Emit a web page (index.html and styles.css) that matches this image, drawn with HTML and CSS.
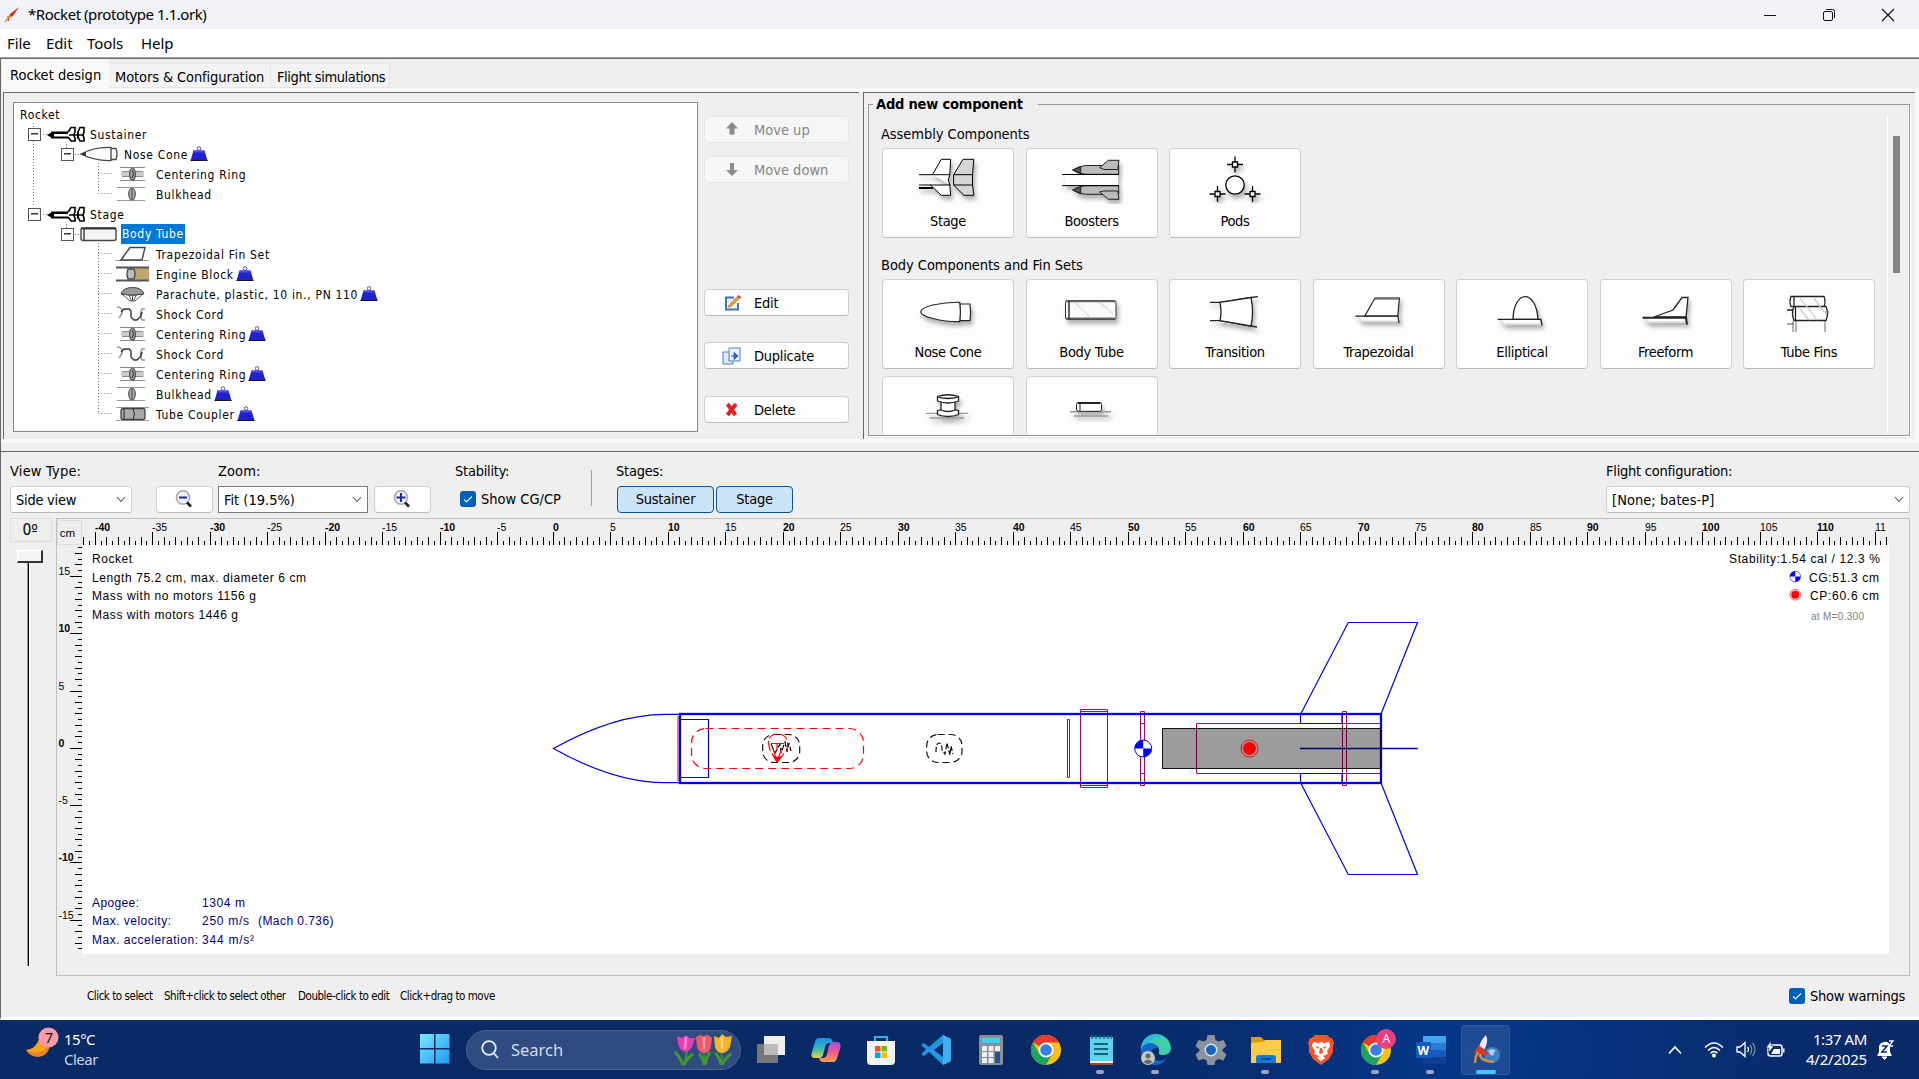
FILE: index.html
```html
<!DOCTYPE html>
<html lang="en">
<head>
<meta charset="utf-8">
<title>*Rocket (prototype 1.1.ork)</title>
<link rel="stylesheet" href="styles.css">
</head>
<body>
<svg class="defs" width="0" height="0">
  <defs>
    <filter id="sh" x="-20%" y="-20%" width="150%" height="160%"><feDropShadow dx="2" dy="4" stdDeviation="2.2" flood-opacity=".3"/></filter>
    <symbol id="weight" viewBox="0 0 18 15"><circle cx="9" cy="2.500" r="1.800" fill="none" stroke="#55a"/><path d="M3.500 4.500h11l3 10H.5z" fill="#2222cc"/><path d="M3.500 4.500h11l.8 2H2.900z" fill="#4b4be8"/><path d="M.5 14.500h17" stroke="#112"/></symbol>
    <symbol id="i-stage" viewBox="0 0 38 16"><path d="M0 9l5-3v6z"/><path d="M4 5.500h19v7H4z"/><path d="M7 8h15v2.500H7z" fill="#fff"/><path d="M21 6l3-4.500h4V6l-1.500 3 1.500 3v3h-4l-3-4M31 6l2-4.500h4V6l-1 3 1 3v3h-4l-2-4z" fill="#fff" stroke="#000" stroke-width="1.600"/><path d="M22 9h15M31 5v8" stroke="#000" stroke-width="1.400"/></symbol>
    <symbol id="i-nose" viewBox="0 0 38 16"><path d="M1 8Q14 1 31 1.500V14.500Q14 15 1 8zM31 2.500h5q2 5.500 0 11h-5" fill="#fff" stroke="#444" stroke-width="1.300"/><path d="M1 8l5-2.200v4.400z" fill="#333"/></symbol>
    <symbol id="i-tube" viewBox="0 0 38 16"><rect x="1" y="2" width="35" height="12.500" rx="2" fill="#f6f6f6" stroke="#444" stroke-width="1.400"/><path d="M1 2.500h35" stroke="#333" stroke-width="2"/><path d="M4 2v12" stroke="#444" stroke-width="1.500"/></symbol>
    <symbol id="i-ring" viewBox="0 0 38 16"><path d="M6 6h23v4H6z" fill="#ccc"/><path d="M5 1.500h25M5 14.500h25M7 5.500h21M7 10.500h21" stroke="#888"/><ellipse cx="17.500" cy="8" rx="2.800" ry="6" fill="#aaa" stroke="#444" stroke-width="1.200"/><path d="M17 4q3 4 0 8" stroke="#222" fill="none"/></symbol>
    <symbol id="i-bulk" viewBox="0 0 38 16"><path d="M2 1.500h28M2 14.500h28" stroke="#999"/><ellipse cx="17" cy="8" rx="3.300" ry="6" fill="#aaa" stroke="#555" stroke-width="1.200"/><path d="M17 2.500v11" stroke="#444"/></symbol>
    <symbol id="i-fin" viewBox="0 0 38 16"><path d="M0 14.500h34" stroke="#999"/><path d="M6 14L15 1.500h15L27 14z" fill="#fff" stroke="#444" stroke-width="1.400"/></symbol>
    <symbol id="i-engine" viewBox="0 0 38 16"><path d="M20 2h14v12H20z" fill="#c4a56c"/><path d="M1 1.500h33M1 14.500h33" stroke="#555" stroke-width="2"/><path d="M13 3h6q2 5 0 10h-6q-2-5 0-10z" fill="#bbb" stroke="#444" stroke-width="1.300"/></symbol>
    <symbol id="i-chute" viewBox="0 0 38 16"><path d="M6 8Q8 1.500 17.500 1.500T29 8L20 9h-5z" fill="#999" stroke="#444"/><path d="M7 8q10 3 21 0l-8 7h-5zM14 9l2.500 6M21 9l-2.500 6M17.500 9v6" fill="none" stroke="#555"/></symbol>
    <symbol id="i-cord" viewBox="0 0 38 16"><path d="M2 1q4 0 5 3t-3 8M30 3h-3q-3 5 0 11h3" stroke="#999" stroke-width="1.600" fill="none"/><path d="M6 6l3-3h5l2 2v6l3 3h3l4-4 1-4" fill="none" stroke="#333" stroke-width="1.400"/></symbol>
    <symbol id="i-coupler" viewBox="0 0 38 16"><path d="M1 1.500h33M1 14.500h33" stroke="#999"/><rect x="6" y="2.500" width="24" height="11" rx="2" fill="#aaa" stroke="#444" stroke-width="1.300"/><path d="M18 2.500q3 5.500 0 11M9 2.500v11" fill="none" stroke="#222"/></symbol>
    <symbol id="chev" viewBox="0 0 10 7"><path d="M1 1l4 4.500L9 1" fill="none" stroke="#555" stroke-width="1.100"/></symbol>
    <symbol id="tick" viewBox="0 0 16 16"><rect width="16" height="16" rx="3" fill="#005fb8"/><path d="M4 8.500l2.500 2.500L12 5.500" fill="none" stroke="#e8f2fb" stroke-width="1.200"/></symbol>
    <symbol id="lens" viewBox="0 0 18 19"><ellipse cx="8" cy="7.500" rx="6.500" ry="6.800" fill="#eef0f8" stroke="#aaa" stroke-width="1.600"/><path d="M12 12.500l4 4" stroke="#222" stroke-width="2.600"/></symbol>
    <symbol id="chrome" viewBox="0 0 32 32"><circle cx="16" cy="16" r="15" fill="#fbc116"/><path d="M16 16L3 8.500A15 15 0 0 1 29 8.500H16z" fill="#e33b2e"/><path d="M3 8.500A15 15 0 0 0 16 31l6.500-11.300L9.500 20z" fill="#1da462"/><circle cx="16" cy="16" r="7.500" fill="#fff"/><circle cx="16" cy="16" r="5.800" fill="#3a7de8"/></symbol>
    <symbol id="cg" viewBox="-10 -10 20 20"><circle r="8.500" fill="#fff" stroke="#00f"/><path d="M0 0V-8.500A8.500 8.500 0 0 0-8.500 0zM0 0V8.500A8.500 8.500 0 0 0 8.500 0z" fill="#00f"/></symbol>
    <symbol id="cp" viewBox="-10 -10 20 20"><circle r="8.500" fill="none" stroke="#f00"/><circle r="6.500" fill="#f00"/></symbol>
  </defs>
</svg>

<header class="titlebar">
  <svg class="app-icon" width="16" height="16" viewBox="0 0 16 16"><path d="M1 15l5-8 9-7-6 9-4 2 0 3-2-1z" fill="#d92a1c"/><path d="M1 15l3-4M3 10l4-1" stroke="#f0a030" stroke-width="1.500"/></svg>
  <span class="title-text">*Rocket (prototype 1.1.ork)</span>
  <div class="win-controls">
    <svg width="14" height="14"><path d="M1 7.500h12" stroke="#111"/></svg>
    <svg width="14" height="14" fill="none" stroke="#111"><rect x="1.500" y="3.500" width="9" height="9" rx="1.500"/><path d="M4 1.500h6.500a2 2 0 0 1 2 2V10"/></svg>
    <svg width="14" height="14"><path d="M1 1l12 12M13 1L1 13" stroke="#111" stroke-width="1.200"/></svg>
  </div>
</header>
<nav class="menubar"><span class="m1">File</span><span class="m2">Edit</span><span class="m3">Tools</span><span class="m4">Help</span></nav>

<main class="app">
  <div class="tabs"><div class="tab active">Rocket design</div><div class="tab t2">Motors &amp; Configuration</div><div class="tab t3">Flight simulations</div></div>
  <section class="upper">
    <div class="pane left-pane">
      <div class="tree">
        <svg class="tree-lines" width="110" height="330" fill="none" stroke="#777" stroke-dasharray="1 2"><path d="M19.500 20v84M52.500 41v4M29 31.500h4M61 51.500h4M84.500 60v30M84.500 70.500H98M84.500 90.500H98M29 111.500h4M52.500 121v4M61 131.500h4M84.500 140v170M84.500 150.500H98M84.500 170.500H98M84.500 190.500H98M84.500 210.500H98M84.500 230.500H98M84.500 250.500H98M84.500 270.500H98M84.500 290.500H98M84.500 310.500H98"/></svg>
        <div class="row root">Rocket</div>
        <div class="row l1"><i class="exp"></i><svg class="ic"><use href="#i-stage"/></svg><span>Sustainer</span></div>
        <div class="row l2"><i class="exp"></i><svg class="ic"><use href="#i-nose"/></svg><span>Nose Cone</span><svg class="wt"><use href="#weight"/></svg></div>
        <div class="row l3"><svg class="ic"><use href="#i-ring"/></svg><span>Centering Ring</span></div>
        <div class="row l3"><svg class="ic"><use href="#i-bulk"/></svg><span>Bulkhead</span></div>
        <div class="row l1"><i class="exp"></i><svg class="ic"><use href="#i-stage"/></svg><span>Stage</span></div>
        <div class="row l2"><i class="exp"></i><svg class="ic"><use href="#i-tube"/></svg><span class="sel">Body Tube</span></div>
        <div class="row l3"><svg class="ic"><use href="#i-fin"/></svg><span>Trapezoidal Fin Set</span></div>
        <div class="row l3"><svg class="ic"><use href="#i-engine"/></svg><span>Engine Block</span><svg class="wt"><use href="#weight"/></svg></div>
        <div class="row l3"><svg class="ic"><use href="#i-chute"/></svg><span>Parachute, plastic, 10 in., PN 110</span><svg class="wt"><use href="#weight"/></svg></div>
        <div class="row l3"><svg class="ic"><use href="#i-cord"/></svg><span>Shock Cord</span></div>
        <div class="row l3"><svg class="ic"><use href="#i-ring"/></svg><span>Centering Ring</span><svg class="wt"><use href="#weight"/></svg></div>
        <div class="row l3"><svg class="ic"><use href="#i-cord"/></svg><span>Shock Cord</span></div>
        <div class="row l3"><svg class="ic"><use href="#i-ring"/></svg><span>Centering Ring</span><svg class="wt"><use href="#weight"/></svg></div>
        <div class="row l3"><svg class="ic"><use href="#i-bulk"/></svg><span>Bulkhead</span><svg class="wt"><use href="#weight"/></svg></div>
        <div class="row l3"><svg class="ic"><use href="#i-coupler"/></svg><span>Tube Coupler</span><svg class="wt"><use href="#weight"/></svg></div>
      </div>
      <div class="actions">
        <div class="btn disabled"><svg width="20" height="18" viewBox="0 0 20 18"><path d="M10 1l6 6.500h-3.500v6h-5v-6H4z" fill="#8c8c8c"/></svg>Move up</div>
        <div class="btn disabled b2"><svg width="20" height="18" viewBox="0 0 20 18"><path d="M10 15l6-6h-4V2H8v7H4z" fill="#8c8c8c"/></svg>Move down</div>
        <div class="btn b3"><svg width="20" height="18" viewBox="0 0 20 18"><path d="M12 3.500H4v12h12V9" fill="#eaf3fd" stroke="#3f76b5" stroke-width="2"/><path d="M7 11l9-9 2 2-9 8.500-3 .5z" fill="#e8a33a" stroke="#a56a1a" stroke-width=".6"/><path d="M16 1.500L18.500 4" stroke="#d44" stroke-width="2"/></svg>Edit</div>
        <div class="btn b4"><svg width="20" height="18" viewBox="0 0 20 18"><path d="M1 5h10v12H1z" fill="#dfeaf7" stroke="#4f80bd"/><path d="M7 1h11v13H7z" fill="#eaf2fb" stroke="#4f80bd"/><path d="M9 9h6M12 5.500L16 9l-4 3.500z" stroke="#2a62d8" fill="#2a62d8"/></svg>Duplicate</div>
        <div class="btn b5"><svg width="20" height="18" viewBox="0 0 20 18"><path d="M5.500 3l8 11M14 3L5.500 14" stroke="#e02424" stroke-width="4"/></svg>Delete</div>
      </div>
    </div>
    <div class="pane right-pane">
      <fieldset class="group">
        <legend>Add new component</legend>
        <div class="lib">
          <h4>Assembly Components</h4>
          <div class="cards">
            <div class="card"><svg class="ci" viewBox="0 0 64 50"><g filter="url(#sh)" stroke="#000" fill="#fff"><path d="M3 20.700h13M3 31h12" /><path d="M3 34h14" stroke-width="2"/><path d="M16.500 20.700L25.300 5.300h9.300l-.8 15.400q-3 5 0 10.300l.8 10.300h-9.300L14.400 31h20M16.500 20.700h17.300"/><path fill="#d6d6d6" d="M37.700 20.700L47 5.300h10.800l-1.300 15.400V31l1.300 10.300H48L37.500 31zM37.700 20.700h19M37.500 31h19"/></g></svg>Stage</div>
            <div class="card"><svg class="ci" viewBox="0 0 64 50"><g filter="url(#sh)" stroke="#222" fill="#bbb"><path d="M5 20.500h53v11H5z" fill="#fff" stroke="none"/><path d="M12.700 16q6-4 13-4.500h33v8.800h-33q-7 0-13-4.300z"/><path d="M12.700 36q6-4 13-4.300h33v8.600h-33q-7 0-13-4.300z"/><path d="M39.600 13.500l8.800-7.200H59l-1.300 9.200h-14zM39.600 38l8.800 7.300H59L57.700 37h-14z"/><path d="M2 20.500h57M2 31.600h57" stroke="#000"/><path d="M12.700 16l8-3v6zM12.700 36l8-3v6z" fill="#555"/></g></svg>Boosters</div>
            <div class="card"><svg class="ci" viewBox="0 0 64 50"><g filter="url(#sh)" stroke="#000" stroke-width="1.300" fill="#fff"><circle cx="32" cy="31" r="9.200"/><path d="M32 2.500v16M24 10.500h16M14.500 32v16M6.500 40h16M49.500 32v16M41.500 40h16"/><path d="M29.500 8h5v5h-5zM12 37.500h5v5h-5zM47 37.500h5v5h-5z"/></g></svg>Pods</div>
          </div>
          <h4 class="h2">Body Components and Fin Sets</h4>
          <div class="cards">
            <div class="card"><svg class="ci" viewBox="0 0 64 50"><g filter="url(#sh)" stroke="#222" fill="#fff" stroke-width="1.200"><path d="M43.900 19h10q1.500 8 0 16.700h-10z"/><path d="M4.700 27q0-4 12-7 14-3 27-2.700 1.500 9.500 0 19.400Q31 37 17 33.500 5 30.500 4.700 27z"/></g></svg>Nose Cone</div>
            <div class="card"><svg class="ci" viewBox="0 0 64 50"><g filter="url(#sh)" stroke="#333" fill="#fafafa"><rect x="5.500" y="15.500" width="50.500" height="19" rx="2"/><path d="M6 16.200h49M6 33.500h49" stroke="#666" stroke-width="2"/><path d="M9 16v18" stroke-width="1.500"/><path d="M14 17q8 7 17 16M38 17q8 4 15 12" stroke="#ccc" fill="none"/></g></svg>Body Tube</div>
            <div class="card"><svg class="ci" viewBox="0 0 64 50"><g filter="url(#sh)" stroke="#222" fill="#fff" stroke-width="1.300"><path d="M7 17.300h10L48 12.500l7-.8M7 35.700h10L48 41l6 1" /><path d="M17 17.300L48 12.500q3 14 0 28.500L17 35.700q2-9 0-18.400z"/></g></svg>Transition</div>
            <div class="card"><svg class="ci" viewBox="0 0 64 50"><g filter="url(#sh)" stroke="#222" fill="#fff" stroke-width="1.200"><path d="M10 31l5 5h37v-5" stroke="#ddd"/><path d="M17.800 31L28 13h24.400L50.800 31z"/><path d="M28 13.500h24" stroke="#777" stroke-width="2.500"/><path d="M8.400 31.200H51l1 7" fill="none"/></g></svg>Trapezoidal</div>
            <div class="card"><svg class="ci" viewBox="0 0 64 50"><g filter="url(#sh)" stroke="#222" fill="#fff" stroke-width="1.300"><path d="M10 35l5 4h35v-4" stroke="#ddd"/><path d="M23 34.300C24 4 46 4 48 34.300z"/><path d="M7.600 34.300H51l1 6" fill="none"/></g></svg>Elliptical</div>
            <div class="card"><svg class="ci" viewBox="0 0 64 50"><g filter="url(#sh)" stroke="#222" fill="#fff" stroke-width="1.300"><path d="M10 33l5 4h36v-4" stroke="#ddd"/><path d="M20 32l19-7 9-12.500h6L52 32z"/><path d="M8.500 32.700H52l1 7" stroke-width="2" fill="none"/></g></svg>Freeform</div>
            <div class="card"><svg class="ci" viewBox="0 0 64 50"><g stroke="#222" fill="#fff" stroke-width="1.300"><path d="M14 11.500h33q2 5 0 10H14q-2-5 0-10zM17 21.500h32q3 7 0 14H17q-3-7 0-14z"/><path d="M17 12v10M18.500 22v14M10 25h6"/><path d="M16 36v11M19 36v11M48 36v11M10 39h7M48 27h4" stroke="#888"/><path d="M22 12q4 6 10 12 3 5 8 11M37 13l10 14M22 23l10 12" stroke="#ccc" fill="none"/></g></svg>Tube Fins</div>
            <div class="card"><svg class="ci" viewBox="0 0 64 50"><g filter="url(#sh)" stroke="#222" fill="#fff" stroke-width="1.300"><path d="M10 31.300h42M14 36h34" stroke="#999"/><path d="M21.500 28.500q10.500-3 21 0v4q-10.500 4-21 0z"/><path d="M25 19v9q7 3 14 0v-9z"/><path d="M21.500 14.500q10.500-3.500 21 0v4.500q-10.500 4-21 0zM21.500 15q10.500 3 21 0"/></g></svg></div>
            <div class="card"><svg class="ci" viewBox="0 0 64 50"><g filter="url(#sh)" stroke="#222" fill="#fff"><path d="M10 29.700h41M14 34h34" stroke="#999" stroke-width="1.500"/><rect x="16.500" y="20.500" width="25" height="8.800" rx="2"/><path d="M18 21h22" stroke-width="2"/><path d="M20 21v8"/></g></svg></div>
          </div>
        </div>
        <div class="scroll"><div class="thumb"></div></div>
      </fieldset>
    </div>
  </section>

  <section class="lower">
    <div class="toolbar">
      <div class="fld f-view"><label>View Type:</label><div class="combo">Side view<svg class="cv"><use href="#chev"/></svg></div></div>
      <div class="zbtn z1"><svg width="18" height="19"><use href="#lens"/><path d="M4 7.500h8" stroke="#1a2ea0" stroke-width="2"/></svg></div>
      <div class="fld f-zoom"><label>Zoom:</label><div class="combo dark">Fit (19.5%)<svg class="cv"><use href="#chev"/></svg></div></div>
      <div class="zbtn z2"><svg width="18" height="19"><use href="#lens"/><path d="M3.500 7.500h9M8 3v9" stroke="#1a2ea0" stroke-width="2"/></svg></div>
      <div class="fld f-stab"><label>Stability:</label><div class="check"><svg width="16" height="16"><use href="#tick"/></svg>Show CG/CP</div></div>
      <div class="vsep"></div>
      <div class="fld f-stages"><label>Stages:</label><div class="toggles"><span class="tg a">Sustainer</span><span class="tg b">Stage</span></div></div>
      <div class="fld f-cfg"><label>Flight configuration:</label><div class="combo">[None; bates-P]<svg class="cv"><use href="#chev"/></svg></div></div>
    </div>
    <div class="stagearea">
      <div class="rot">
        <div class="deg">0º</div>
        <div class="knob"></div><div class="track"></div>
      </div>
      <div class="frame">
        <div class="unit">cm</div>
        <svg id="hruler" width="1807" height="25" viewBox="82 520 1807 25"></svg>
        <svg id="vruler" width="25" height="409" viewBox="57 545 25 409"></svg>
        <svg class="canvas" width="1807" height="409" viewBox="82 545 1807 409">
          <g fill="none" stroke="#b00060">
            <path d="M1067.500 719.500h2v58h-2zM1080.500 709.500h27v78h-27zM1080.500 711.500h27M1080.500 785.500h27M1140.500 711.500h4v74h-4zM1140.500 723.500h4M1140.500 773.500h4M1342.500 711.500h4v74h-4zM1381 723.500h-184.500v50H1381M678 716v65"/>
          </g>
          <g fill="none" stroke="#0000e6">
            <path d="M680 714.300H665C630 714.300 590 728 553.400 748.500 590 769 630 782.700 665 782.700h15M680 719.500h28.500v58H680" stroke-width="1.200"/>
            <path d="M1300.700 714L1348.300 622.500h69.200L1381 714M1300.700 783l47.600 91.500h69.200L1381 783M1300.500 714v9.500h41.500V714M1300.500 783v-9.500h41.500v9.500" stroke-width="1.200"/>
            <rect x="680" y="714" width="701" height="69" stroke-width="2.300"/>
            <path d="M1300 748.500h117.700" stroke="#0000b4" stroke-width="1.400"/>
          </g>
          <rect x="1162.500" y="728.500" width="218.500" height="40" fill="#000" fill-opacity=".39" stroke="#111"/>
          <g fill="none" stroke="#111" stroke-width="1.200">
            <rect x="762.700" y="734.500" width="37" height="28" rx="11" stroke-dasharray="7 4"/>
            <rect x="926.700" y="734.500" width="35.300" height="28" rx="11" stroke-dasharray="7 4"/>
            <path d="M771 744l4 9 5-9 1 9 4-11 2 10 2-9 2 8" stroke-dasharray="6 2"/>
            <path d="M936 752q0-9 3-9t3 7l3 4 2-11 3 12 1-9 2 8" stroke-dasharray="5 2"/>
          </g>
          <g fill="none" stroke="#f00" stroke-width="1.200">
            <rect x="691.500" y="728.500" width="172" height="40" rx="14" stroke-dasharray="8 5"/>
            <path d="M770 750q-5-15 7-16 13 0 10 16l-10 12z" stroke-dasharray="9 3"/>
            <path d="M771 743.500h13M777 743v7M777 762l-4-14M777 762l5-14"/>
            <path d="M774 757h7l-3.500 5z" fill="#f00"/>
          </g>
          <use href="#cg" x="1133.200" y="738.500" width="20" height="20"/>
          <use href="#cp" x="1239.500" y="738.500" width="20" height="20"/>
          <g class="ct">
            <text x="92" y="563" textLength="40">Rocket</text>
            <text x="92" y="582" textLength="214">Length 75.2 cm, max. diameter 6 cm</text>
            <text x="92" y="600" textLength="164">Mass with no motors 1156 g</text>
            <text x="92" y="619" textLength="146">Mass with motors 1446 g</text>
            <text x="1729" y="563" textLength="151">Stability:1.54 cal / 12.3 %</text>
            <text x="1809" y="582" textLength="70">CG:51.3 cm</text>
            <text x="1810" y="600" textLength="69">CP:60.6 cm</text>
            <text x="1811" y="619.500" textLength="53" class="mach">at M=0.300</text>
          </g>
          <use href="#cg" x="1789" y="570.300" width="12.500" height="12.500"/>
          <use href="#cp" x="1789" y="588.500" width="12.500" height="12.500"/>
          <g class="ct navy">
            <text x="92" y="907" textLength="47">Apogee:</text><text x="202" y="907" textLength="43">1304 m</text>
            <text x="92" y="925" textLength="79">Max. velocity:</text><text x="202" y="925" textLength="47">250 m/s</text><text x="258" y="925" textLength="75.500">(Mach 0.736)</text>
            <text x="92" y="944" textLength="106">Max. acceleration:</text><text x="202" y="944" textLength="52">344 m/s²</text>
          </g>
        </svg>
      </div>
    </div>
    <div class="hints"><span class="h-a">Click to select</span><span class="h-b">Shift+click to select other</span><span class="h-c">Double-click to edit</span><span class="h-d">Click+drag to move</span>
      <div class="check warn"><svg width="16" height="16"><use href="#tick"/></svg>Show warnings</div></div>
  </section>
</main>

<footer class="taskbar">
  <div class="weather">
    <svg width="36" height="34" viewBox="0 0 36 34"><path d="M26 12a15 15 0 0 1-25 11q10-1 13-11l12-2z" fill="#f5a21d"/><path d="M1 23q14 8 24-6-1 12-12 13-8 0-12-7z" fill="#ee7f22"/><circle cx="23.500" cy="10.500" r="10" fill="#ff99a4"/><text x="20" y="15.500" class="badge">7</text></svg>
    <div class="wtxt"><span>15°C</span><span class="dim">Clear</span></div>
  </div>
  <div class="tb-main">
    <svg class="start" width="30" height="30"><defs><linearGradient id="gWin" x1="0" y1="0" x2="1" y2="1"><stop offset="0" stop-color="#7be8fb"/><stop offset="1" stop-color="#1a9cf5"/></linearGradient></defs><path d="M0 0h14v14H0zM15.500 0h14v14h-14zM0 15.500h14v14H0zM15.500 15.500h14v14h-14z" fill="url(#gWin)"/></svg>
    <div class="search"><svg width="20" height="20" fill="none" stroke="#e8ecf5" stroke-width="1.800"><circle cx="9" cy="8" r="6.800"/><path d="M13.500 13l4.500 5"/></svg><span>Search</span>
      <svg class="tulips" width="60" height="32" viewBox="0 0 60 32"><g stroke="#3f9a2a" stroke-width="1.800" fill="none"><path d="M14 17q-1 7-3 14M31 16v15M49 16l-1 15"/><path d="M2 18q5 5 8 13M20 20q-6 4-9 11M26 20q4 4 5 11M37 18q-4 6-5 13M42 19q5 5 6 12M58 20q-6 4-9 11" stroke-width="3"/></g><path d="M4 2l5 2 4-3 3 3 6 0-3 9q-4 6-9 4-4-2-5-8z" fill="#e83fb4"/><path d="M23 3l4-2 4 1 4-1 4 3-1 9q-2 6-7 6t-7-6z" fill="#f0596c"/><path d="M41 2l5 2 3-4 4 3 6-1-2 11q-3 6-8 6t-7-6z" fill="#f5b428"/><path d="M13 3l-1 12M31 3v12M49 3v12" stroke="#fff" stroke-opacity=".4" stroke-width="2.500"/></svg></div>
    <div class="apps">
      <div class="app-i"><svg viewBox="0 0 32 32"><path d="M2 10h21v19H2z" fill="#777"/><path d="M9 2h21v19H9z" fill="#eee"/><path d="M9 10h14v11H9z" fill="#bbb"/></svg></div>
      <div class="app-i"><svg viewBox="0 0 32 32"><defs><linearGradient id="c1" x1="0" y1="0" x2="0" y2="1"><stop offset="0" stop-color="#1a8bf0"/><stop offset=".6" stop-color="#41c3a8"/><stop offset="1" stop-color="#f2d23c"/></linearGradient><linearGradient id="c2" x1="0" y1="0" x2="0" y2="1"><stop offset="0" stop-color="#a052e8"/><stop offset=".5" stop-color="#f0568c"/><stop offset="1" stop-color="#ffa04a"/></linearGradient></defs><path d="M9 4h10q3 0 4 5h-4q-3 0-4 4l-2 8q-1 3-4 3H5q-5 0-3-6L5 8q1-4 4-4z" fill="url(#c1)"/><path d="M23 28H13q-3 0-4-4h4q3 0 4-4l2-8q1-4 4-4h4q5 0 3 7l-3 9q-1 4-4 4z" fill="url(#c2)"/></svg></div>
      <div class="app-i"><svg viewBox="0 0 32 32"><path d="M10 9V3h12v6" fill="none" stroke="#35b0f0" stroke-width="2"/><path d="M2 7h28v20q0 4-4 4H6q-4 0-4-4z" fill="#f3f3f3"/><path d="M10 12h5.500v5.500H10z" fill="#f25022"/><path d="M16.500 12H22v5.500h-5.500z" fill="#7fba00"/><path d="M10 18.500h5.500V24H10z" fill="#00a4ef"/><path d="M16.500 18.500H22V24h-5.500z" fill="#ffb900"/></svg></div>
      <div class="app-i"><svg viewBox="0 0 32 32"><path d="M23 1l8 4v22l-8 4L9 18 4 22l-3-2 5-4.500L1 11l3-2 5 4z" fill="#2196e3"/><path d="M23 9v14l-9-7z" fill="#0a2c6b"/><path d="M23 1l8 4v22l-8 4z" fill="#3db0f5"/></svg></div>
      <div class="app-i"><svg viewBox="0 0 32 32"><rect x="4" y="1" width="24" height="30" rx="2" fill="#8a8f96"/><path d="M7 4h18v5H7z" fill="#3fd0f5"/><path d="M7 12h5v5H7zM13.500 12h5v5h-5zM20 12h5v5h-5zM7 18h5v5H7zM13.500 18h5v5h-5zM7 24h5v5H7zM13.500 24h5v5h-5z" fill="#eee"/><path d="M20 18h5v11h-5z" fill="#1d5591"/></svg></div>
      <div class="app-i"><svg viewBox="0 0 32 32"><use href="#chrome"/></svg></div>
      <div class="app-i run"><svg viewBox="0 0 32 32"><path d="M5 3h23v26H5z" fill="#5fd4e8"/><path d="M5 28h23v3H5z" fill="#a04c20"/><path d="M5 27h23v2H5z" fill="#eee"/><path d="M7 1v4M11 1v4M15 1v4M19 1v4M23 1v4M26 1v4" stroke="#186a86" stroke-width="1.500"/><path d="M9 10h14M9 15h14M9 20h14" stroke="#136080" stroke-width="2"/></svg></div>
      <div class="app-i run"><svg viewBox="0 0 32 32"><path d="M1 16A15 15 0 0 1 31 14q0 7-8 7-5 0-4-3 1-7-6-7-9 0-9 9z" fill="#3ccfa8"/><path d="M1 16A15 15 0 0 1 16 1q6 0 9 3-13-3-17 7z" fill="#2bb6e8"/><path d="M1 16q2-7 10-7 5 0 7 5-7-1-7 6 1 6 8 7 4 0 7-2-4 6-11 6Q1 30 1 16z" fill="#1268c8"/><circle cx="8" cy="24" r="7" fill="#c9c5c2"/><circle cx="8" cy="22" r="2.500" fill="#666"/><path d="M3.500 28q4.500-5 9 0-4 4-9 0z" fill="#666"/></svg></div>
      <div class="app-i"><svg viewBox="0 0 32 32"><path d="M12.500 1h7l1 5 3 1.500 5-1.500 3 6-4 3.500v1.500l4 3.500-3 6-5-1.500-3 1.500-1 4.500h-7l-1-4.500-3-1.500-5 1.500-3-6L4.500 17v-1.500L.5 12l3-6 5 1.500 3-1.500z" fill="#8b929b"/><circle cx="16" cy="16" r="6.500" fill="#cfe6fa"/><circle cx="16" cy="16" r="5" fill="#1864b8"/></svg></div>
      <div class="app-i run"><svg viewBox="0 0 32 32"><path d="M1 3h10l4 4h8v5H1z" fill="#dc9a0c"/><path d="M1 9l12-1 2-2h16v23H1z" fill="#ffcc4a"/><path d="M6 29v-5q0-3 3-3h14q3 0 3 3v5z" fill="#157ad6"/><path d="M11 25h10" stroke="#0d4d96" stroke-width="2"/></svg></div>
      <div class="app-i"><svg viewBox="0 0 32 32"><path d="M10 1h12l3 3 2 0 2 5-1 3 0 6-4 7-8 6-8-6-4-7V12L3 9l2-5h2z" fill="#fb542b"/><path d="M8 8l5 1 3-1 3 1 5-1 1 4-3 5 1 3-5 2 2 2-4 3-4-3 2-2-5-2 1-3-3-5z" fill="#fff"/><path d="M10 12l4 1-1 2zM22 12l-4 1 1 2zM15 14h2l1 5-2 1-2-1z" fill="#fb542b"/></svg></div>
      <div class="app-i run"><svg viewBox="0 0 32 32"><use href="#chrome"/></svg><span class="prof">A</span></div>
      <div class="app-i run"><svg viewBox="0 0 32 32"><path d="M8 2h23v8H8z" fill="#41a5ee"/><path d="M8 9h23v8H8z" fill="#2b7cd3"/><path d="M8 16h23v7H8z" fill="#185abd"/><path d="M8 23h23v7H8z" fill="#103f91"/><rect x="1" y="8" width="15" height="16" rx="1" fill="#185abd"/><text x="2.500" y="20.500" class="w">W</text></svg></div>
      <div class="app-i cur"><svg viewBox="0 0 32 32"><circle cx="22" cy="21" r="8" fill="#3f7fc4"/><path d="M18 17q4-4 8 0-3 1-2 4-3 2-6-4z" fill="#a8cdf0"/><path d="M16 1q3 7-2 15l-5-2Q10 7 16 1z" fill="#f3ecec"/><path d="M8 11l6 4 5 5-4 2-5-2-7-1 4-4z" fill="#d63a2c"/><path d="M8 18q-3 5-3 11M10 20q0 7 14 8" stroke="#d98c3a" stroke-width="2.500" fill="none"/></svg></div>
    </div>
  </div>
  <div class="tray">
    <svg class="t-a" width="14" height="10"><path d="M1 8.500L7 2l6 6.500" fill="none" stroke="#fff" stroke-width="1.600"/></svg>
    <svg class="t-b" width="20" height="17" viewBox="0 0 20 17" fill="none" stroke="#fff" stroke-width="1.500"><path d="M1 6.500q9-9 18 0M4 9.500q6-6 12 0M6.500 12.300q3.500-3.500 7 0"/><circle cx="10" cy="14.500" r="1.200" fill="#fff"/></svg>
    <svg class="t-c" width="20" height="17" viewBox="0 0 20 17" fill="none" stroke="#fff" stroke-width="1.300"><path d="M1 6h3l5-4.500v14L4 11H1z"/><path d="M11.500 6q2 2.500 0 5"/><path d="M14 4q3.500 4.500 0 9M16.500 2q5 6.500 0 13" stroke-opacity=".45"/></svg>
    <svg class="t-d" width="21" height="17" viewBox="0 0 21 17"><rect x="3" y="4" width="14" height="11" rx="2.500" fill="none" stroke="#fff" stroke-width="1.500"/><path d="M18 7.500h1.500v4H18zM9 8h6v5H6z" fill="#fff"/><path d="M6 0L1 7h3l-1 5 6-7H6z" fill="#fff" stroke="#0b2a66" stroke-width=".6"/></svg>
    <div class="clock"><span>1:37 AM</span><span>4/2/2025</span></div>
    <svg class="t-e" width="20" height="20" viewBox="0 0 20 20"><path d="M8 2q5-1 6 4v6l2 4H1l2-4V7q0-4 5-5z" fill="#fff"/><path d="M6 17h5l-2.500 2.500z" fill="#fff" stroke="#fff"/><path d="M6 6h5l-5 6h5" stroke="#0b2a66" fill="none" stroke-width="1.500"/><path d="M13 1h4l-4 5h4" stroke="#fff" fill="none" stroke-width="1.300"/></svg>
  </div>
</footer>
<script src="script.js"></script>
</body>
</html>
```
FILE: styles.css
```css
* { box-sizing: border-box; }
body { margin: 0; width: 1919px; height: 1079px; overflow: hidden; background: #efefef; color: #000; display: flex; flex-direction: column; font: 14.5px/18px "DejaVu Sans Condensed", "DejaVu Sans", sans-serif; letter-spacing: -0.25px; white-space: nowrap; }
svg { display: block; flex: none; }
.defs { height: 0; }
.titlebar { flex: none; height: 29px; background: #f1f3f9; display: flex; align-items: center; padding-left: 4px; font: 15px/20px "Noto Sans", sans-serif; letter-spacing: -0.45px; }
.title-text { margin: -2px 0 0 8px; }
.win-controls { margin-left: auto; display: flex; gap: 45px; padding-right: 24px; }
.menubar { flex: none; height: 29px; background: #fff; border-bottom: 1px solid #a9a9a9; display: flex; align-items: center; padding: 0 0 0 7px; font: 15px/20px "Noto Sans", sans-serif; letter-spacing: -0.1px; }
.menubar span { width: 39px; }
.menubar .m2 { width: 41px; }
.menubar .m3 { width: 54px; }
.app { flex: none; height: 962px; border-left: 1px solid #696969; border-bottom: 3px solid #fff; display: flex; flex-direction: column; }
.tabs { flex: none; height: 34px; border-top: 1px solid #696969; border-bottom: 4px solid #f9f9f9; display: flex; align-items: flex-end; padding-left: 1px; }
.tab { height: 25px; padding-top: 4px; background: #f3f3f3; border: 1px solid #e5e5e5; border-width: 1px 1px 1px 0; }
.tab.active { width: 107px; height: 29px; padding: 7px 0 0 8px; background: #f9f9f9; border: 0; letter-spacing: 0; }
.t2 { width: 162px; padding-left: 6px; letter-spacing: -0.1px; }
.t3 { width: 119px; padding-left: 6px; letter-spacing: -0.4px; }
.upper { flex: none; height: 351px; padding-left: 2px; display: flex; gap: 4px; border-bottom: 4px solid #f9f9f9; border-right: 4px solid #f9f9f9; }
.pane { border: 1px solid #696969; border-width: 1px 0 0 1px; display: flex; }
.left-pane { width: 856px; padding: 9px 0 0 9px; }
.right-pane { flex: 1; padding: 0 5px 0 4px; }
.tree { position: relative; width: 685px; height: 330px; background: #fff; border: 1px solid #828790; padding: 1px 0 0 6px; font-size: 12px; letter-spacing: 0.68px; }
.tree-lines { position: absolute; left: 0; top: 0; }
.row { height: 20px; display: flex; align-items: center; position: relative; }
.row span, .root { padding-top: 1px; }
.ic { width: 38px; height: 16px; }
.wt { width: 18px; height: 15px; margin: -2px 0 0 2px; }
.exp { width: 13px; height: 13px; border: 1px solid #555; background: linear-gradient(#333, #333) center/7px 1.5px no-repeat #fff; }
.l1 { padding-left: 8px; }
.l1 .ic { margin: 0 5px 0 6px; }
.l2 { padding-left: 41px; }
.l2 .ic { margin: 0 6px 0 6px; }
.l3 { padding-left: 95px; }
.l3 .ic { margin-right: 3px; }
.row .sel { background: #0078d7; color: #fff; height: 20px; line-height: 20px; padding: 0 1px; margin-left: -3px; }
.actions { padding: 14px 0 0 6px; }
.btn { width: 145px; height: 27px; margin-bottom: 13px; background: #fdfdfd; border: 1px solid #d0d0d0; border-bottom-color: #b8b8b8; border-radius: 4px; display: flex; align-items: center; padding-left: 17px; gap: 12px; }
.btn.disabled { background: #f6f6f6; border-color: #e6e6e6; color: #858585; letter-spacing: 0; }
.b2 { margin-bottom: 106px; }
.b3 { margin-bottom: 26px; }
.b4 { margin-bottom: 27px; }
.group { flex: 1; margin: 0; min-width: 0; height: 343px; border: 1px solid #999; box-shadow: 1px 1px 0 #fff; padding: 0 8px 0 12px; display: flex; justify-content: space-between; }
.group legend { font-weight: bold; padding: 0 15px 0 3px; margin-left: -8px; height: 23px; line-height: 22px; letter-spacing: -0.2px; }
.lib { width: 1005px; height: 318px; overflow: hidden; }
.lib h4 { margin: 0; font-weight: normal; height: 32px; padding-top: 9px; letter-spacing: -0.05px; }
.lib h4.h2 { height: 41px; padding-top: 18px; }
.lib .cards { display: grid; grid-template-columns: repeat(7, 132px); gap: 7px 11.500px; margin-left: 1px; letter-spacing: -0.35px; }
.lib .cards:not(:last-child) { height: 90px; }
.card { height: 90px; background: #fdfdfd; border: 1px solid #d0d0d0; border-bottom-color: #b8b8b8; border-radius: 4px; display: flex; flex-direction: column; align-items: center; padding-top: 5px; }
.ci { width: 64px; height: 50px; margin-bottom: 8px; }
.scroll { width: 14px; height: 318px; border-left: 1px solid #fff; padding: 20px 0 0 5px; }
.thumb { width: 7px; height: 137px; background: #858585; }
.lower { flex: 1; margin-top: 8px; margin-left: -1px; border-top: 1px solid #696969; border-left: 1px solid #696969; display: flex; flex-direction: column; }
.toolbar { flex: none; height: 66px; display: flex; padding: 10px 9px 0 9px; }
.fld label { display: block; height: 24px; line-height: 18px; }
.f-view label { letter-spacing: 0.2px; }
.f-zoom label { letter-spacing: 0.1px; }
.combo { height: 27px; background: #fdfdfd; border: 1px solid #d0d0d0; border-bottom-color: #b8b8b8; border-radius: 3px; display: flex; align-items: center; justify-content: space-between; padding: 0 5px; }
.combo.dark { border: 1px solid #7a7a7a; border-radius: 0; letter-spacing: 0; }
.f-cfg .combo { letter-spacing: 0.05px; }
.cv { width: 10px; height: 7px; }
.f-view { width: 122px; }
.zbtn { width: 57px; height: 27px; margin-top: 24px; background: #fdfdfd; border: 1px solid #d0d0d0; border-bottom-color: #b8b8b8; border-radius: 4px; display: flex; align-items: center; justify-content: center; padding-right: 1px; }
.z1 { margin: 24px 5px 0 24px; }
.z2 { margin: 24px 24px 0 6px; }
.f-zoom { width: 150px; }
.check { display: flex; align-items: center; gap: 5px; height: 27px; }
.f-stab { width: 136px; }
.f-stab .check { padding-left: 5px; letter-spacing: 0; margin-top: -1px; }
.vsep { width: 1px; height: 36px; margin: 8px 24px 0 0; background: #a0a0a0; }
.toggles { display: flex; gap: 2px; margin-left: 1px; }
.tg { height: 27px; line-height: 25px; background: #cce4f7; border: 1px solid #005499; border-radius: 4px; text-align: center; }
.tg.a { width: 97px; }
.tg.b { width: 77px; }
.f-cfg { margin-left: auto; width: 304px; }
.stagearea { flex: none; display: flex; padding: 0 9px; height: 458px; justify-content: space-between; }
.rot { width: 42px; }
.deg { width: 42px; height: 24px; border: 1px solid #dcdcdc; line-height: 23px; font-size: 15.5px; text-align: center; padding-right: 2px; margin-bottom: 8px; }
.knob { width: 26px; height: 13px; margin-left: 7px; background: #f4f4f4; border: 1px solid #fff; border-right: 2px solid #333; border-bottom: 2px solid #333; }
.track { width: 3px; height: 403px; margin-left: 17px; border-left: 1px solid #999; border-right: 1px solid #fff; background: #000; }
.frame { width: 1854px; height: 458px; border: 1px solid #bfbfbf; display: grid; grid-template: 25px 409px / 25px 1807px; padding-top: 1px; align-content: start; }
.unit { border: 1px solid #dcdcdc; font: 11.5px/25px "Liberation Sans", sans-serif; text-align: center; letter-spacing: 0; padding-right: 4px; }
.canvas { background: #fff; }
#hruler text, #vruler text { font: 10.5px "Liberation Sans", sans-serif; letter-spacing: 0; }
#hruler .maj, #vruler .maj { font-weight: bold; }
.ct text { font: 12px "Liberation Sans", sans-serif; letter-spacing: 0; }
.ct.navy { fill: #000080; }
.ct text.mach { font-size: 10px; fill: #808080; }
.hints { flex: 1; display: flex; align-items: center; padding: 0 14px 2px 86px; font-size: 11.5px; letter-spacing: -0.45px; }
.h-a { width: 77px; }
.h-b { width: 134px; }
.h-c { width: 102px; }
.warn { margin-left: auto; font-size: 14.5px; letter-spacing: -0.25px; }
.taskbar { flex: 1; background: radial-gradient(circle at 1470px 30px, #05388a 0, #082d70 260px, rgba(8, 45, 112, 0) 420px), #0a2a66; color: #fff; font: 15px/20px "Noto Sans", sans-serif; letter-spacing: -0.5px; display: flex; }
.weather { display: flex; width: 420px; padding: 7px 0 0 25px; gap: 3px; }
.badge { font: 14px "Noto Sans", sans-serif; fill: #111; }
.wtxt span { display: block; height: 20px; line-height: 24px; }
.dim { color: #c9d3e6; }
.tb-main { display: flex; align-items: center; }
.start { margin: -1px 16px 0 0; }
.search { width: 275px; height: 40px; border-radius: 20px; background: #304b80; border: 1px solid #4a628f; display: flex; align-items: center; padding: 0 7px 0 13px; font-size: 16.5px; color: #d5dcea; letter-spacing: 0; }
.search span { margin-left: 11px; }
.tulips { margin-left: auto; }
.apps { display: flex; margin-left: 5px; }
.app-i { position: relative; width: 49px; height: 50px; margin-right: 6px; padding: 9px 8.500px; border-radius: 4px; border: 0; }
.app-i svg { width: 32px; height: 32px; }
.run::after, .cur::after { content: ""; position: absolute; left: 20px; bottom: 1px; width: 8px; height: 4px; border-radius: 2px; background: #9ba7bf; }
.cur { background: rgba(255, 255, 255, .1); box-shadow: inset 0 0 0 1px rgba(255, 255, 255, .08); }
.cur::after { left: 14.500px; width: 20px; background: #4cc2ff; }
.prof { position: absolute; left: 25px; top: 4px; width: 20px; height: 20px; border-radius: 50%; background: #e8407c; font-size: 12px; line-height: 20px; text-align: center; }
.w { font: bold 12px "Noto Sans", sans-serif; fill: #fff; }
.tray { margin-left: auto; display: flex; align-items: center; padding-right: 23px; }
.t-b { margin-left: 22px; }
.t-c { margin-left: 12px; }
.t-d { margin-left: 9px; }
.clock { margin: -2px 0 0 14px; width: 67px; text-align: right; line-height: 20px; letter-spacing: -0.2px; }
.clock span { display: block; }
.clock span:first-child { letter-spacing: -0.4px; }
.t-e { margin-left: 9px; }
```
FILE: script.js
```js
// Draws the centimetre rulers along the top and left edges of the rocket view.
const NS = "http://www.w3.org/2000/svg";
const SCALE = 11.493;

function add(parent, tag, attrs, text) {
  const el = document.createElementNS(NS, tag);
  for (const k in attrs) el.setAttribute(k, attrs[k]);
  if (text !== undefined) el.textContent = text;
  parent.appendChild(el);
}

const h = document.getElementById("hruler");
let d = "";
for (let i = -82; i <= 232; i++) {
  const x = Math.floor(553.5 + (i / 2) * SCALE + (i < 0 ? 1.5 : 0)) + 0.5;
  if (x < 82 || x > 1888) continue;
  const len = i % 10 === 0 ? 13 : i % 2 === 0 ? 8 : 4;
  d += `M${x} 545v${-len}`;
  if (i % 10 === 0) {
    const cm = i / 2;
    add(h, "text", { x: x - 0.5, y: 531, class: cm % 10 === 0 ? "maj" : "min" }, cm === 115 ? "11" : String(cm));
  }
}
add(h, "path", { d, stroke: "#000", fill: "none" });

const v = document.getElementById("vruler");
d = "";
for (let i = -35; i <= 35; i++) {
  const y = Math.floor(748.3 - (i / 2) * 11.46) + 0.5;
  if (y < 545 || y > 953) continue;
  const len = i % 10 === 0 ? 12 : i % 2 === 0 ? 7 : 4;
  d += `M82 ${y}h${-len}`;
  if (i % 10 === 0) {
    const cm = i / 2;
    add(v, "text", { x: 58.5, y: y - 1.8, class: cm % 10 === 0 ? "maj" : "min" }, String(cm));
  }
}
add(v, "path", { d, stroke: "#000", fill: "none" });
```
